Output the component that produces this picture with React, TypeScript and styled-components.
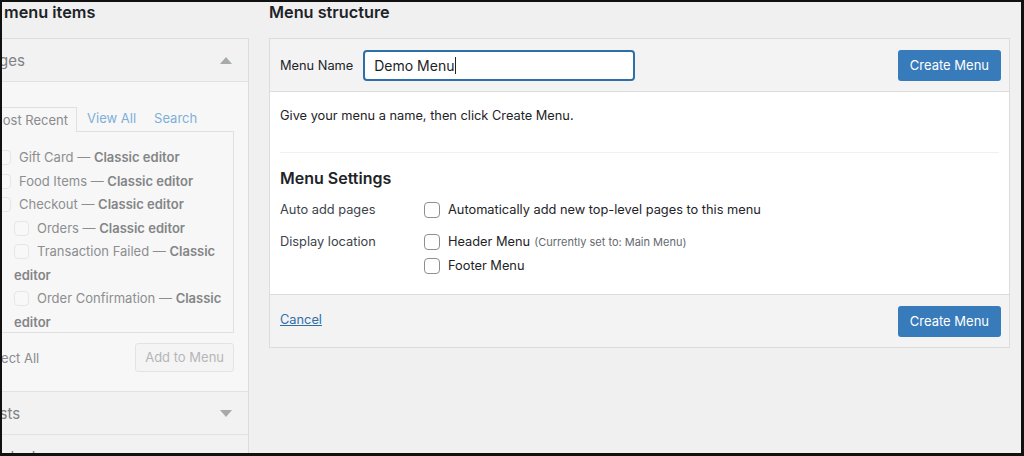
import { createGlobalStyle } from "styled-components";
import styled from "styled-components";

const GlobalStyle = createGlobalStyle`
  html, body {
    margin: 0;
    padding: 0;
    background: #000;
  }
  body {
    font-family: Inter, "Noto Sans", sans-serif;
    color: #1d2327;
  }
`;

const Frame = styled.div`
  box-sizing: border-box;
  width: 1024px;
  height: 456px;
  border-style: solid;
  border-color: #111;
  border-width: 2px 3px 3px 2px;
  background: #f0f0f1;
  overflow: hidden;
  display: flex;
  gap: 20px;
  padding-right: 11px;
`;

const LeftColumn = styled.div`
  flex: 0 0 281px;
  margin-left: -34px;
`;

const RightColumn = styled.div`
  flex: 1;
  min-width: 0;
`;

const ColumnTitle = styled.h2`
  margin: 0;
  height: 36px;
  line-height: 20px;
  font-size: 16.3px;
  font-weight: 600;
  color: #1d2327;
`;

const SideBox = styled.div`
  border: 1px solid #dcdcde;
  border-bottom: none;
  background: #f7f7f7;
`;

const SectionHead = styled.div`
  height: 42px;
  display: flex;
  align-items: center;
  justify-content: space-between;
  padding: 0 16px 0 12px;
  background: #f2f2f2;
  color: #7f8183;
  font-size: 15px;
  border-bottom: 1px solid #e2e2e3;
`;

const Caret = styled.span<{ $up?: boolean }>`
  width: 0;
  height: 0;
  border-left: 6px solid transparent;
  border-right: 6px solid transparent;
  ${(p) =>
    p.$up
      ? "border-bottom: 7px solid #a7aaad;"
      : "border-top: 7px solid #a7aaad;"}
`;

const SectionBody = styled.div`
  padding: 24px 14px 19px 13px;
  border-bottom: 1px solid #e2e2e3;
`;

const Tabs = styled.div`
  display: flex;
  align-items: flex-end;
  font-size: 13px;
`;

const Tab = styled.span<{ $active?: boolean }>`
  height: 25px;
  line-height: 24px;
  box-sizing: border-box;
  ${(p) =>
    p.$active
      ? `
    padding: 0 8px;
    border: 1px solid #e0e0e1;
    border-bottom: none;
    background: #f7f7f7;
    color: #898b8d;
    margin-bottom: -1px;
    position: relative;
  `
      : `
    color: #7eafd9;
    padding: 0 8px 0 10px;
  `}
`;

const TabPanel = styled.div`
  border: 1px solid #e0e0e1;
  background: #f7f7f7;
  padding: 14px 0 0 13px;
  height: 202px;
  box-sizing: border-box;
  overflow: hidden;
`;

const PageItem = styled.div<{ $indent?: boolean }>`
  font-size: 13px;
  line-height: 23.5px;
  color: #8c8e90;
  padding-left: ${(p) => (p.$indent ? "18px" : "0")};
  padding-right: 10px;
`;

const FadedBox = styled.span`
  display: inline-block;
  width: 15px;
  height: 15px;
  border: 1px solid #e6e6e7;
  border-radius: 4px;
  background: #f8f8f8;
  margin: 4px 8px 0 0;
  vertical-align: top;
  box-sizing: border-box;
`;

const Strong = styled.b`
  font-weight: 600;
  color: #838587;
`;

const ActionRow = styled.div`
  display: flex;
  justify-content: space-between;
  align-items: center;
  margin-top: 10px;
  font-size: 13px;
  color: #8a8c8e;
`;

const GhostButton = styled.span`
  box-sizing: border-box;
  height: 29px;
  line-height: 27px;
  padding: 0 9px;
  border: 1px solid #e3e3e4;
  border-radius: 3px;
  background: #f4f4f4;
  color: #b4b6b8;
  font-size: 13px;
`;

const Panel = styled.div`
  border: 1px solid #dcdcde;
  background: #fff;
`;

const PanelHead = styled.div`
  display: flex;
  align-items: center;
  justify-content: space-between;
  height: 52px;
  padding: 0 8px 0 10px;
  background: #f3f3f4;
  border-bottom: 1px solid #dcdcde;
`;

const NameField = styled.label`
  display: flex;
  align-items: center;
  gap: 10px;
  font-size: 12.8px;
`;

const NameInput = styled.div`
  box-sizing: border-box;
  width: 272px;
  height: 31px;
  border: 2px solid #2f6fa8;
  border-radius: 4px;
  background: #fff;
  display: flex;
  align-items: center;
  padding-left: 9px;
  font-size: 14px;
`;

const Cursor = styled.span`
  display: inline-block;
  width: 1px;
  height: 17px;
  background: #1d2327;
  margin-left: 1px;
`;

const PrimaryButton = styled.span`
  box-sizing: border-box;
  height: 31px;
  line-height: 31px;
  padding: 0 12px;
  background: #377bba;
  border-radius: 3px;
  color: #fff;
  font-size: 13px;
`;

const PanelBody = styled.div`
  padding: 14px 10px 7px 10px;
`;

const Note = styled.p`
  margin: 0;
  font-size: 12.8px;
  line-height: 20px;
`;

const Rule = styled.hr`
  border: none;
  border-top: 1px solid #f0f0f1;
  margin: 26px 0 14px 0;
`;

const SettingsTitle = styled.h3`
  margin: 0 0 10px 0;
  font-size: 16px;
  font-weight: 600;
  line-height: 22px;
`;

const SettingRow = styled.div`
  display: grid;
  grid-template-columns: 144px 1fr;
  font-size: 12.8px;
  margin-bottom: 10px;
`;

const SettingLabel = styled.span`
  color: #3c434a;
  line-height: 22px;
`;

const Options = styled.div`
  display: flex;
  flex-direction: column;
  gap: 2px;
`;

const Option = styled.label`
  display: flex;
  align-items: center;
  line-height: 22px;
  gap: 8px;
`;

const Check = styled.span`
  box-sizing: border-box;
  width: 16px;
  height: 16px;
  border: 1px solid #8c8f94;
  border-radius: 4px;
  background: #fff;
`;

const Hint = styled.span`
  font-size: 11px;
  color: #646970;
  margin-left: -4px;
`;

const PanelFoot = styled.div`
  display: flex;
  align-items: center;
  justify-content: space-between;
  height: 52px;
  padding: 0 8px 0 10px;
  background: #f3f3f4;
  border-top: 1px solid #dcdcde;
`;

const CancelLink = styled.a`
  color: #2f6fa8;
  font-size: 12.8px;
  text-decoration: underline;
  padding-bottom: 4px;
`;

const pages = [
  { title: "Gift Card", indent: false },
  { title: "Food Items", indent: false },
  { title: "Checkout", indent: false },
  { title: "Orders", indent: true },
  { title: "Transaction Failed", indent: true },
  { title: "Order Confirmation", indent: true },
];

export default function App() {
  return (
    <>
      <GlobalStyle />
      <Frame>
        <LeftColumn>
          <ColumnTitle>Add menu items</ColumnTitle>
          <SideBox>
            <SectionHead>
              <span>Pages</span>
              <Caret $up />
            </SectionHead>
            <SectionBody>
              <Tabs>
                <Tab $active>Most Recent</Tab>
                <Tab>View All</Tab>
                <Tab>Search</Tab>
              </Tabs>
              <TabPanel>
                {pages.map((p) => (
                  <PageItem key={p.title} $indent={p.indent}>
                    <FadedBox />
                    {p.title} — <Strong>Classic editor</Strong>
                  </PageItem>
                ))}
              </TabPanel>
              <ActionRow>
                <span>Select All</span>
                <GhostButton>Add to Menu</GhostButton>
              </ActionRow>
            </SectionBody>
            <SectionHead>
              <span>Posts</span>
              <Caret />
            </SectionHead>
            <SectionHead>
              <span>Products</span>
              <Caret />
            </SectionHead>
          </SideBox>
        </LeftColumn>
        <RightColumn>
          <ColumnTitle>Menu structure</ColumnTitle>
          <Panel>
            <PanelHead>
              <NameField>
                Menu Name
                <NameInput>
                  Demo Menu
                  <Cursor />
                </NameInput>
              </NameField>
              <PrimaryButton>Create Menu</PrimaryButton>
            </PanelHead>
            <PanelBody>
              <Note>Give your menu a name, then click Create Menu.</Note>
              <Rule />
              <SettingsTitle>Menu Settings</SettingsTitle>
              <SettingRow>
                <SettingLabel>Auto add pages</SettingLabel>
                <Options>
                  <Option>
                    <Check />
                    Automatically add new top-level pages to this menu
                  </Option>
                </Options>
              </SettingRow>
              <SettingRow>
                <SettingLabel>Display location</SettingLabel>
                <Options>
                  <Option>
                    <Check />
                    Header Menu <Hint>(Currently set to: Main Menu)</Hint>
                  </Option>
                  <Option>
                    <Check />
                    Footer Menu
                  </Option>
                </Options>
              </SettingRow>
            </PanelBody>
            <PanelFoot>
              <CancelLink>Cancel</CancelLink>
              <PrimaryButton>Create Menu</PrimaryButton>
            </PanelFoot>
          </Panel>
        </RightColumn>
      </Frame>
    </>
  );
}
